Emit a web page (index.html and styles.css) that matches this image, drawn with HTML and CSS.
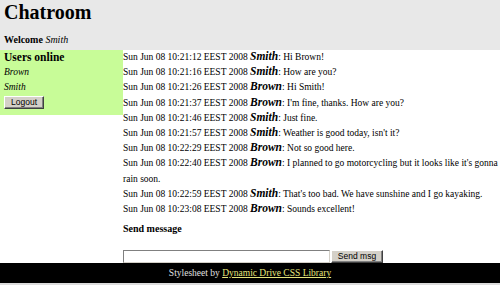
FILE: index.html
```html
<!DOCTYPE html>
<html>
<head>
<meta charset="utf-8">
<title>Chatroom</title>
<link rel="stylesheet" href="styles.css">
</head>
<body>
<div class="top">
  <h1 class="title">Chatroom</h1>
  <p class="welcome">Welcome <i>Smith</i></p>
</div>
<div class="main">
  <div class="left">
    <h3 class="users-title">Users online</h3>
    <div class="user"><i>Brown</i></div>
    <div class="user"><i>Smith</i></div>
    <button class="btn logout" type="button">Logout</button>
  </div>
  <div class="content">
    <div class="messages">
      <div class="msg">Sun Jun 08 10:21:12 EEST 2008 <b class="name">Smith</b>: Hi Brown!</div>
      <div class="msg">Sun Jun 08 10:21:16 EEST 2008 <b class="name">Smith</b>: How are you?</div>
      <div class="msg">Sun Jun 08 10:21:26 EEST 2008 <b class="name">Brown</b>: Hi Smith!</div>
      <div class="msg">Sun Jun 08 10:21:37 EEST 2008 <b class="name">Brown</b>: I'm fine, thanks. How are you?</div>
      <div class="msg">Sun Jun 08 10:21:46 EEST 2008 <b class="name">Smith</b>: Just fine.</div>
      <div class="msg">Sun Jun 08 10:21:57 EEST 2008 <b class="name">Smith</b>: Weather is good today, isn't it?</div>
      <div class="msg">Sun Jun 08 10:22:29 EEST 2008 <b class="name">Brown</b>: Not so good here.</div>
      <div class="msg">Sun Jun 08 10:22:40 EEST 2008 <b class="name">Brown</b>: I planned to go motorcycling but it looks like it's gonna rain soon.</div>
      <div class="msg">Sun Jun 08 10:22:59 EEST 2008 <b class="name">Smith</b>: That's too bad. We have sunshine and I go kayaking.</div>
      <div class="msg">Sun Jun 08 10:23:08 EEST 2008 <b class="name">Brown</b>: Sounds excellent!</div>
    </div>
    <h4 class="send-title">Send message</h4>
    <form class="send-form" onsubmit="return false;">
      <input class="msg-input" type="text">
      <button class="btn send" type="button">Send msg</button>
    </form>
  </div>
</div>
<div class="footer">Stylesheet by <a class="footer-link" href="#">Dynamic Drive CSS Library</a></div>
</body>
</html>
```

FILE: styles.css
```css
html, body {
  margin: 0;
  padding: 0;
  background: #ffffff;
}
body {
  font-family: "Liberation Serif", "Times New Roman", serif;
  font-size: 9.5px;
  color: #000;
}
.top {
  background: #e8e8e8;
  padding: 0 4px 3px;
}
.title {
  margin: 0 0 8px;
  font-size: 20px;
  line-height: 24px;
  font-weight: bold;
}
.welcome {
  margin: 0;
  font-size: 10px;
  line-height: 15px;
  font-weight: bold;
}
.welcome i {
  font-weight: normal;
}
.main {
  display: flex;
  align-items: flex-start;
}
.left {
  width: 119px;
  flex: none;
  background: #c8fc98;
  padding: 0 0 6px 4px;
}
.users-title {
  margin: 0;
  font-size: 11.5px;
  line-height: 15px;
  font-weight: bold;
}
.user {
  line-height: 15.2px;
}
.btn {
  font-family: "Liberation Sans", Arial, sans-serif;
  font-size: 8.5px;
  background: #d4d0c8;
  color: #000;
  border: 1px solid;
  border-color: #ffffff #404040 #404040 #ffffff;
  box-shadow: inset -1px -1px 0 #808080;
  padding: 0 5px;
  height: 13px;
  line-height: 11px;
  margin: 0;
}
.logout {
  display: block;
  width: 40px;
  margin-top: 1px;
}
.content {
  flex: 1;
  min-width: 0;
}
.msg {
  line-height: 15.2px;
}
.name {
  font-style: italic;
  font-size: 11.5px;
  line-height: 10px;
}
.send-title {
  margin: 4px 0 0;
  font-size: 10px;
  line-height: 15px;
  font-weight: bold;
}
.send-form {
  display: flex;
  align-items: flex-start;
  margin: 14px 0 0;
}
.msg-input {
  box-sizing: border-box;
  width: 207px;
  height: 13px;
  margin: 0 1px 0 0;
  padding: 0;
  border: 1px solid;
  border-color: #808080 #d4d0c8 #d4d0c8 #808080;
  background: #fff;
}
.send {
  width: 52px;
}
.footer {
  background: #000;
  color: #e0e0e0;
  text-align: center;
  height: 20px;
  line-height: 20px;
  border-bottom: 2px solid #dcdcdc;
}
.footer-link {
  color: #e6e67c;
  text-decoration: underline;
}
```
